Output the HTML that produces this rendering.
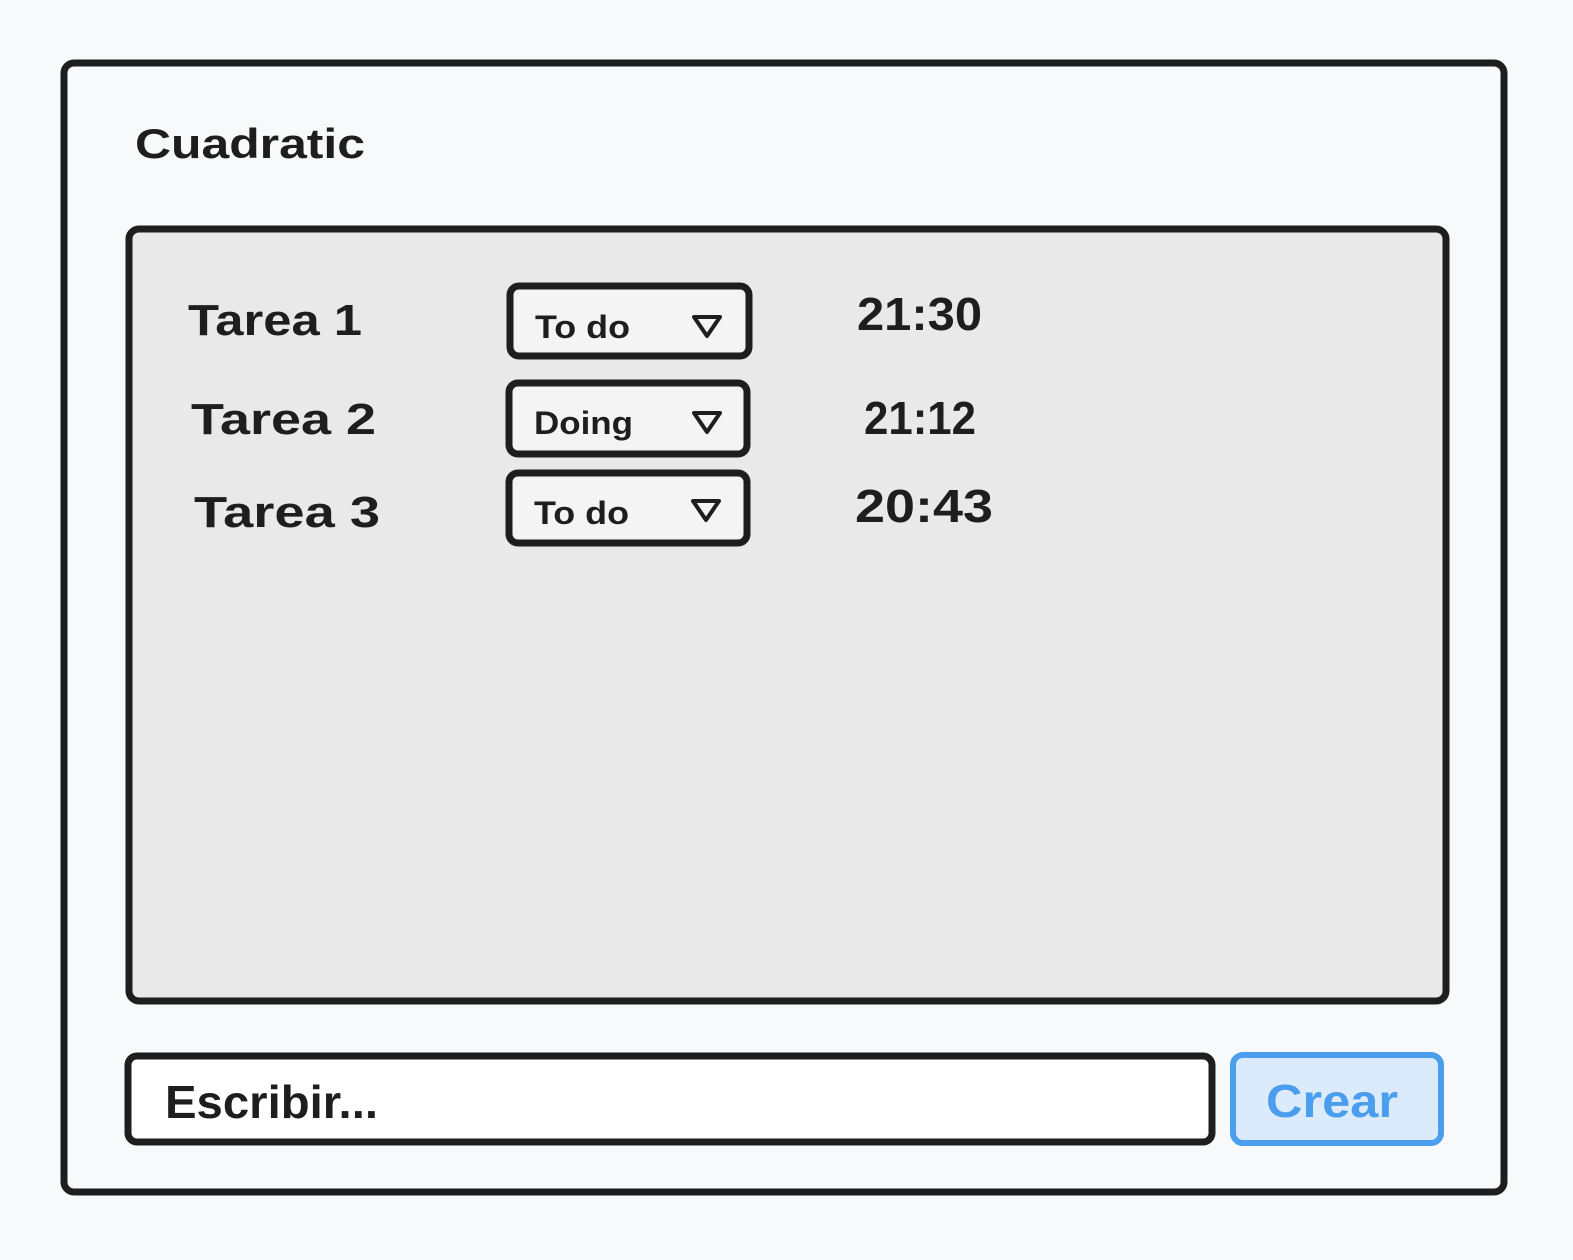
<!DOCTYPE html>
<html><head><meta charset="utf-8"><style>
html,body{margin:0;padding:0;background:#f8f9fb;}
svg{display:block}
text{font-family:"Liberation Sans",sans-serif;font-weight:bold;fill:#1e1e1e}
</style></head><body>
<svg width="1573" height="1260" viewBox="0 0 1573 1260" xmlns="http://www.w3.org/2000/svg">
<rect x="0" y="0" width="1573" height="1260" fill="#f8f9fb"/>
<rect x="64" y="63" width="1440" height="1129" rx="10" fill="#f8f9fb" stroke="#1e1e1e" stroke-width="7"/>
<text x="135" y="158" font-size="42" textLength="230" lengthAdjust="spacingAndGlyphs">Cuadratic</text>
<rect x="129" y="229" width="1317" height="772" rx="10" fill="#e9e9e9" stroke="#1e1e1e" stroke-width="7"/>

<text x="188" y="335" font-size="44" textLength="174" lengthAdjust="spacingAndGlyphs">Tarea 1</text>
<text x="191" y="434" font-size="44" textLength="185" lengthAdjust="spacingAndGlyphs">Tarea 2</text>
<text x="194" y="527" font-size="44" textLength="186" lengthAdjust="spacingAndGlyphs">Tarea 3</text>

<g fill="#f4f4f4" stroke="#1e1e1e" stroke-width="7">
<rect x="510" y="286" width="239" height="70" rx="9"/>
<rect x="509" y="383" width="238" height="71" rx="9"/>
<rect x="509" y="473" width="238" height="70" rx="9"/>
</g>
<text x="535" y="338" font-size="32" textLength="95" lengthAdjust="spacingAndGlyphs">To do</text>
<text x="534" y="434" font-size="32" textLength="99" lengthAdjust="spacingAndGlyphs">Doing</text>
<text x="534" y="524" font-size="32" textLength="95" lengthAdjust="spacingAndGlyphs">To do</text>
<g fill="none" stroke="#1e1e1e" stroke-width="4" stroke-linejoin="round">
<path d="M694 317 L720 317 L707 336 Z"/>
<path d="M694 413 L720 413 L707 432 Z"/>
<path d="M693 501 L719 501 L706 520 Z"/>
</g>

<text x="857" y="330" font-size="46" textLength="125" lengthAdjust="spacingAndGlyphs">21:30</text>
<text x="864" y="434" font-size="46" textLength="112" lengthAdjust="spacingAndGlyphs">21:12</text>
<text x="855" y="522" font-size="46" textLength="138" lengthAdjust="spacingAndGlyphs">20:43</text>

<rect x="128" y="1056" width="1084" height="86" rx="9" fill="#fff" stroke="#1e1e1e" stroke-width="7"/>
<text x="165" y="1118" font-size="46" textLength="213" lengthAdjust="spacingAndGlyphs">Escribir...</text>
<rect x="1233" y="1055" width="208" height="88" rx="10" fill="#dbebfb" stroke="#4a9eed" stroke-width="6"/>
<text x="1266" y="1117" font-size="46" textLength="132" lengthAdjust="spacingAndGlyphs" style="fill:#4a9eed">Crear</text>
</svg>
</body></html>
